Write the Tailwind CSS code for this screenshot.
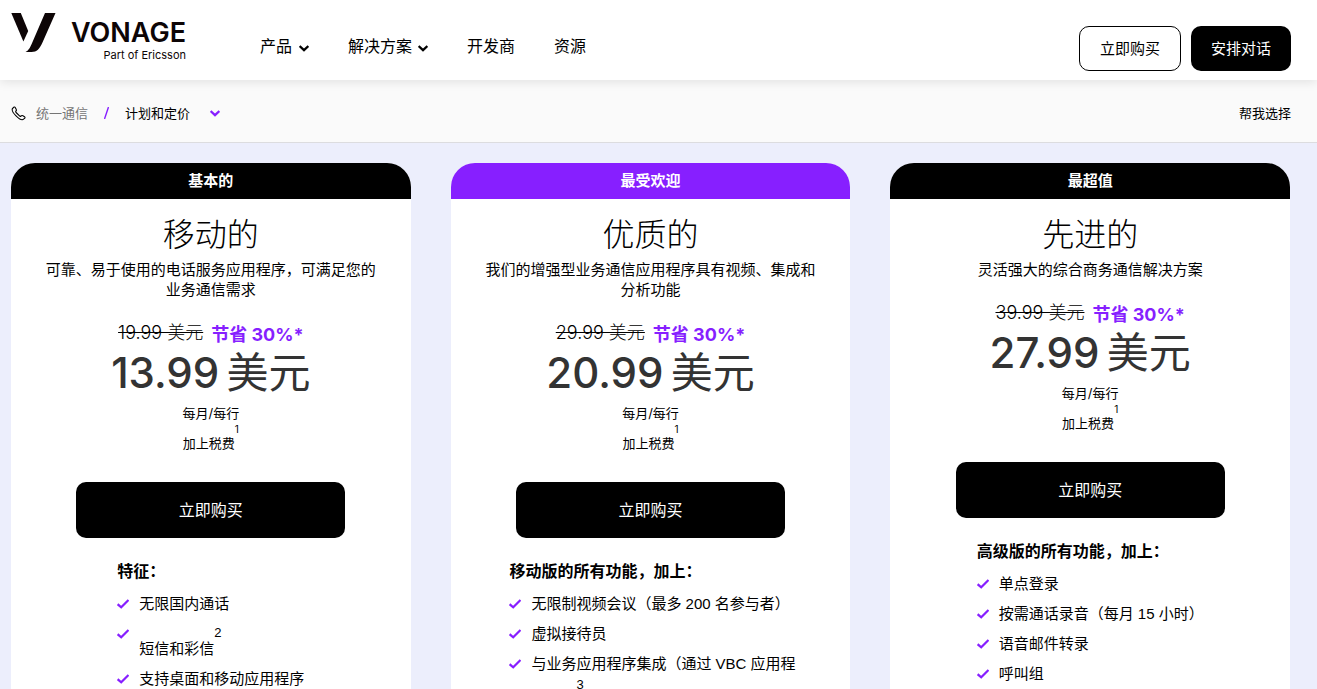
<!DOCTYPE html>
<html lang="zh-CN">
<head>
<meta charset="utf-8">
<meta name="viewport" content="width=device-width, initial-scale=1">
<title>Vonage 计划和定价</title>
<script src="https://cdn.jsdelivr.net/npm/@tailwindcss/browser@4"></script>
</head>
<body class="bg-[#eceefc] font-['Inter','Noto_Sans_CJK_SC',sans-serif] text-black">
<svg class="hidden" aria-hidden="true">
  <symbol id="chevron" viewBox="0 0 10 7"><path d="M.6 1 5 5.200 9.400 1" fill="none" stroke="currentColor" stroke-width="2.3"/></symbol>
  <symbol id="check" viewBox="0 0 12 10"><path d="M.6 5.200 4.200 8.300 11.500 1" fill="none" stroke="currentColor" stroke-width="2.2"/></symbol>
</svg>

<header class="relative z-10 flex h-20 items-start bg-white pl-[11px] pr-[26px] shadow-[0_2px_10px_rgba(0,0,0,0.1)]">
  <a href="#" aria-label="Vonage" class="flex w-[249px] shrink-0 gap-[15px] pt-[13px]">
    <svg class="h-[39px] w-[45px]" viewBox="0 0 45 39" fill="#0d0506" aria-hidden="true">
      <path d="M0.300 0H9.800L17.200 18 12.400 28.500Z"/>
      <path d="M34 0H44.500L31.700 29C28.500 36 26 39 20.500 39H14.500C18 37.500 19.500 33.500 21.500 29Z"/>
    </svg>
    <span class="flex flex-col items-end pt-1 text-[#0d0506]">
      <span class="text-[27px] font-semibold leading-8">VONAGE</span>
      <span class="text-[11px] leading-3">Part of Ericsson</span>
    </span>
  </a>
  <nav class="flex gap-[39px] pt-[34px] text-base leading-6">
    <button class="flex items-center gap-[7px]">产品<svg class="mt-1 h-[7px] w-[10px]"><use href="#chevron"/></svg></button>
    <button class="flex items-center gap-[6px]">解决方案<svg class="mt-1 h-[7px] w-[10px]"><use href="#chevron"/></svg></button>
    <a href="#">开发商</a>
    <a href="#">资源</a>
  </nav>
  <div class="ml-auto flex gap-[10px] pt-[26px] text-[15px] leading-[22px]">
    <a href="#" class="flex h-[45px] items-center rounded-[10px] border border-black bg-white px-5">立即购买</a>
    <a href="#" class="flex h-[45px] items-center rounded-[10px] bg-black px-5 text-white">安排对话</a>
  </div>
</header>

<div class="flex h-[63px] items-center border-b border-[#dcdcdf] bg-[#fafafa] pl-[11px] pr-[26px] pt-1 text-[13px] leading-5">
  <svg class="mr-[10px] h-[15px] w-[15px]" viewBox="0 0 15 15" fill="none" stroke="black" stroke-width="1.1" aria-hidden="true">
    <path d="M2.8 1.2 1.3 2.8C.9 4 2 6.800 4.800 9.700S10.800 14 12 13.600L13.800 12.200C14.200 11.700 14 11 13.500 10.700L11.500 9.600C11 9.300 10.500 9.500 10 10 9.500 10.500 9 10.400 8.500 9.900L5.100 6.500C4.600 6 4.500 5.500 5 5 5.500 4.500 5.600 4 5.300 3.500L4.200 1.500C3.900 1 3.200.8 2.800 1.200Z"/>
  </svg>
  <a href="#" class="text-[#757575]">统一通信</a>
  <svg class="mx-4 h-3 w-[5px]" viewBox="0 0 5 12" stroke="#871fff" stroke-width="1.4" aria-hidden="true"><path d="M4.500 0 .5 12"/></svg>
  <button class="flex items-center gap-[20px]">计划和定价<svg class="h-[7px] w-[10px] text-[#871fff]"><use href="#chevron"/></svg></button>
  <a href="#" class="ml-auto">帮我选择</a>
</div>

<main class="grid grid-cols-3 gap-10 pl-[11px] pr-[27px] pt-5">
  <section class="rounded-t-[24px] bg-white pb-10 text-center">
    <p class="rounded-t-[24px] bg-black text-[15px] font-bold leading-9 text-white">基本的</p>
    <h2 class="mt-[11px] text-[32px] font-light leading-[50px]">移动的</h2>
    <p class="mx-auto max-w-[332px] text-[15px] leading-5">可靠、易于使用的电话服务应用程序，可满足您的业务通信需求</p>
    <div class="mt-5 flex justify-center gap-2 text-[18px] leading-[26px]"><s class="font-light">19.99 美元</s><strong class="pt-[2px] text-[#871fff]">节省 30%*</strong></div>
    <p class="text-[42px] font-medium leading-[50px] text-[#333]">13.99 <span class="-ml-1 font-normal">美元</span></p>
    <p class="text-[13px] leading-[30px]">每月/每行</p>
    <p class="flex justify-center text-[13px] leading-[30px]">加上税费<sup class="-top-1 text-[10px] leading-none">1</sup></p>
    <a href="#" class="mx-auto mt-6 block max-w-[269px] rounded-[10px] bg-black text-base leading-[56px] text-white">立即购买</a>
    <div class="mx-auto mt-5 w-fit max-w-[284px] text-left">
      <h3 class="mb-[5px] text-base font-bold leading-[26px]">特征：</h3>
      <ul class="font-['Liberation_Sans','Noto_Sans_CJK_SC',sans-serif] text-[15px]">
        <li class="flex gap-[10px]"><svg class="mt-[10px] h-[10px] w-3 shrink-0 text-[#871fff]"><use href="#check"/></svg><span class="leading-[30px]">无限国内通话</span></li>
        <li class="flex gap-[10px]"><svg class="mt-[10px] h-[10px] w-3 shrink-0 text-[#871fff]"><use href="#check"/></svg><span class="flex pt-[15px] leading-[30px]">短信和彩信<sup class="-top-2 text-[13px] leading-none">2</sup></span></li>
        <li class="flex gap-[10px]"><svg class="mt-[10px] h-[10px] w-3 shrink-0 text-[#871fff]"><use href="#check"/></svg><span class="leading-[30px]">支持桌面和移动应用程序</span></li>
      </ul>
    </div>
  </section>

  <section class="rounded-t-[24px] bg-white pb-10 text-center">
    <p class="rounded-t-[24px] bg-[#871fff] text-[15px] font-bold leading-9 text-white">最受欢迎</p>
    <h2 class="mt-[11px] text-[32px] font-light leading-[50px]">优质的</h2>
    <p class="mx-auto max-w-[332px] text-[15px] leading-5">我们的增强型业务通信应用程序具有视频、集成和分析功能</p>
    <div class="mt-5 flex justify-center gap-2 text-[18px] leading-[26px]"><s class="font-light">29.99 美元</s><strong class="pt-[2px] text-[#871fff]">节省 30%*</strong></div>
    <p class="text-[42px] font-medium leading-[50px] text-[#333]">20.99 <span class="-ml-1 font-normal">美元</span></p>
    <p class="text-[13px] leading-[30px]">每月/每行</p>
    <p class="flex justify-center text-[13px] leading-[30px]">加上税费<sup class="-top-1 text-[10px] leading-none">1</sup></p>
    <a href="#" class="mx-auto mt-6 block max-w-[269px] rounded-[10px] bg-black text-base leading-[56px] text-white">立即购买</a>
    <div class="mx-auto mt-5 w-fit max-w-[284px] text-left">
      <h3 class="mb-[5px] text-base font-bold leading-[26px]">移动版的所有功能，加上：</h3>
      <ul class="-mr-1 font-['Liberation_Sans','Noto_Sans_CJK_SC',sans-serif] text-[15px]">
        <li class="flex gap-[10px]"><svg class="mt-[10px] h-[10px] w-3 shrink-0 text-[#871fff]"><use href="#check"/></svg><span class="leading-[30px]">无限制视频会议（最多 200 名参与者）</span></li>
        <li class="flex gap-[10px]"><svg class="mt-[10px] h-[10px] w-3 shrink-0 text-[#871fff]"><use href="#check"/></svg><span class="leading-[30px]">虚拟接待员</span></li>
        <li class="flex gap-[10px]"><svg class="mt-[10px] h-[10px] w-3 shrink-0 text-[#871fff]"><use href="#check"/></svg><span class="leading-[30px]">与业务应用程序集成（通过 VBC 应用程<span class="flex pt-[7px]">序中心<sup class="-top-2 text-[13px] leading-none">3</sup>）</span></span></li>
      </ul>
    </div>
  </section>

  <section class="rounded-t-[24px] bg-white pb-10 text-center">
    <p class="rounded-t-[24px] bg-black text-[15px] font-bold leading-9 text-white">最超值</p>
    <h2 class="mt-[11px] text-[32px] font-light leading-[50px]">先进的</h2>
    <p class="mx-auto max-w-[332px] text-[15px] leading-5">灵活强大的综合商务通信解决方案</p>
    <div class="mt-5 flex justify-center gap-2 text-[18px] leading-[26px]"><s class="font-light">39.99 美元</s><strong class="pt-[2px] text-[#871fff]">节省 30%*</strong></div>
    <p class="text-[42px] font-medium leading-[50px] text-[#333]">27.99 <span class="-ml-1 font-normal">美元</span></p>
    <p class="text-[13px] leading-[30px]">每月/每行</p>
    <p class="flex justify-center text-[13px] leading-[30px]">加上税费<sup class="-top-1 text-[10px] leading-none">1</sup></p>
    <a href="#" class="mx-auto mt-6 block max-w-[269px] rounded-[10px] bg-black text-base leading-[56px] text-white">立即购买</a>
    <div class="mx-auto mt-5 w-fit max-w-[284px] text-left">
      <h3 class="mb-[5px] text-base font-bold leading-[26px]">高级版的所有功能，加上：</h3>
      <ul class="font-['Liberation_Sans','Noto_Sans_CJK_SC',sans-serif] text-[15px]">
        <li class="flex gap-[10px]"><svg class="mt-[10px] h-[10px] w-3 shrink-0 text-[#871fff]"><use href="#check"/></svg><span class="leading-[30px]">单点登录</span></li>
        <li class="flex gap-[10px]"><svg class="mt-[10px] h-[10px] w-3 shrink-0 text-[#871fff]"><use href="#check"/></svg><span class="leading-[30px]">按需通话录音（每月 15 小时）</span></li>
        <li class="flex gap-[10px]"><svg class="mt-[10px] h-[10px] w-3 shrink-0 text-[#871fff]"><use href="#check"/></svg><span class="leading-[30px]">语音邮件转录</span></li>
        <li class="flex gap-[10px]"><svg class="mt-[10px] h-[10px] w-3 shrink-0 text-[#871fff]"><use href="#check"/></svg><span class="leading-[30px]">呼叫组</span></li>
      </ul>
    </div>
  </section>
</main>
</body>
</html>
